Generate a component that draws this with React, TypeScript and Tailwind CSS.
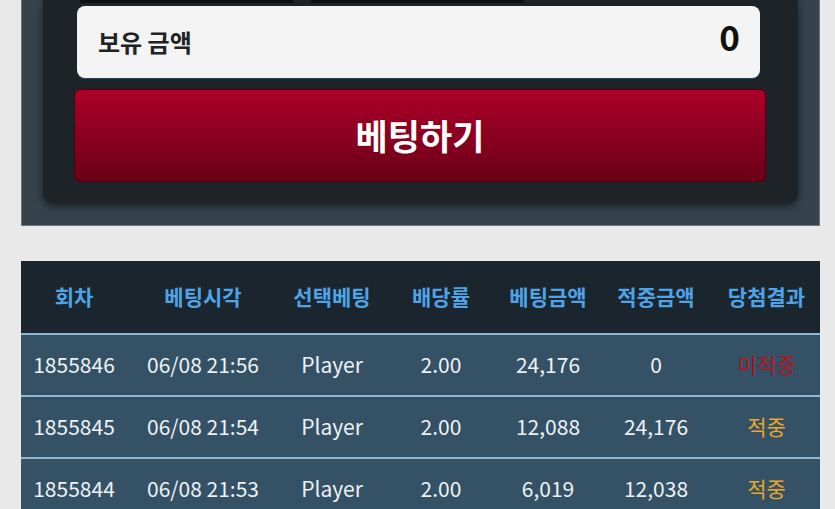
const rows = [
  { round: '1855846', time: '06/08 21:56', pick: 'Player', odds: '2.00', bet: '24,176', win: '0', result: '미적중', hit: false },
  { round: '1855845', time: '06/08 21:54', pick: 'Player', odds: '2.00', bet: '12,088', win: '24,176', result: '적중', hit: true },
  { round: '1855844', time: '06/08 21:53', pick: 'Player', odds: '2.00', bet: '6,019', win: '12,038', result: '적중', hit: true },
];

const heads = ['회차', '베팅시각', '선택베팅', '배당률', '베팅금액', '적중금액', '당첨결과'];

export default function App() {
  return (
    <div className="min-h-[509px] bg-[#e9e9e9] pl-[21px] pr-[15px] font-['Noto_Sans_CJK_KR','Noto_Sans',sans-serif] overflow-hidden">
      {/* ── Bet panel ── */}
      <div className="bg-[#36434d] border border-t-0 border-[#66767f] px-[21px] pb-[22px]">
        <div className="bg-[#1d2327] rounded-b-[10px] shadow-[0_3px_8px_rgba(0,0,0,0.55)] pb-[21px]">
          <div className="h-[6px] flex gap-[18px] pl-[37px]">
            <div className="w-[213px] h-[3px] bg-[#0c0e10]" />
            <div className="w-[213px] h-[3px] bg-[#0c0e10]" />
          </div>
          <div className="ml-[34px] mr-[38px] h-[72px] rounded-[8px] bg-[#f4f4f4] shadow-[0_1px_0_#27406a] flex items-center justify-between pl-[21px] pr-[20px]">
            <span className="text-[24px] font-bold text-[#222]">보유 금액</span>
            <span className="text-[35px] font-bold text-[#111] leading-none -mt-[14px]">0</span>
          </div>
          <button className="mt-[11px] ml-[31px] mr-[32px] w-[calc(100%-63px)] h-[93px] rounded-[6px] border border-[#4d0010] bg-gradient-to-b from-[#ad0029] to-[#6a0017] flex items-center justify-center">
            <span className="text-[35px] font-bold text-white">베팅하기</span>
          </button>
        </div>
      </div>

      {/* ── History table ── */}
      <div className="mt-[35px] w-[799px]">
        <div className="grid grid-cols-[106px_152px_106px_112px_102px_114px_107px] h-[74px] items-center bg-[#1b252e] border-b-2 border-[#8db6d4]">
          {heads.map((h) => (
            <div key={h} className="text-center text-[21px] font-bold text-[#4ea4e6]">{h}</div>
          ))}
        </div>
        {rows.map((r) => (
          <div key={r.round} className="grid grid-cols-[106px_152px_106px_112px_102px_114px_107px] h-[62px] items-center bg-[#345166] border-b-2 border-[#8db6d4] text-[21px] text-[#eef2f5]">
            <div className="text-center">{r.round}</div>
            <div className="text-center">{r.time}</div>
            <div className="text-center">{r.pick}</div>
            <div className="text-center">{r.odds}</div>
            <div className="text-center">{r.bet}</div>
            <div className="text-center">{r.win}</div>
            <div className={r.hit ? 'text-center text-[#eba72a]' : 'text-center text-[#b5121f]'}>{r.result}</div>
          </div>
        ))}
      </div>
    </div>
  );
}
